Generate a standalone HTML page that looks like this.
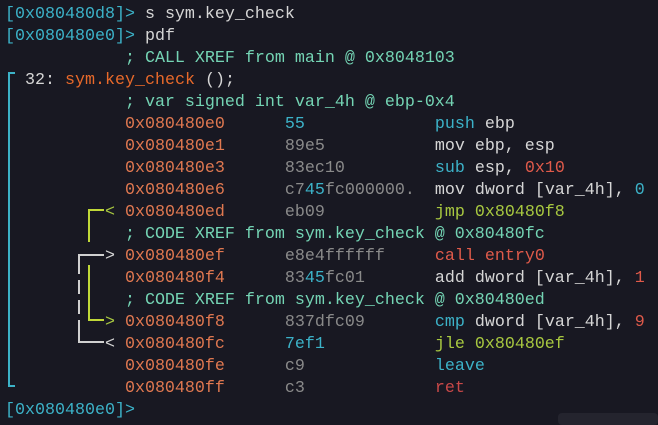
<!DOCTYPE html>
<html><head><style>
body{margin:0;width:658px;height:421px;background:#181822;overflow:hidden;position:relative;font-family:"Liberation Mono",monospace;font-size:16.67px;}
.l{position:absolute;left:5px;height:22px;line-height:22px;white-space:pre;color:#d6d6d6;margin-top:2px}
.p{color:#3cb2c8}.c{color:#74d4b4}.o{color:#e8692a}.a{color:#e07850}.g{color:#8a8a8a}.cy{color:#3cb2c8}
.y{color:#a8c840}.r{color:#e05a4a}.rr{color:#c84848}.w{color:#d6d6d6}.n{color:#3cb2c8}
.ln{position:absolute;}
</style></head><body>
<div class="l" style="top:2px"><span class="p">[0x080480d8]&gt;</span> s sym.key_check</div>
<div class="l" style="top:24px"><span class="p">[0x080480e0]&gt;</span> pdf</div>
<div class="l" style="top:46px">            <span class="c">; CALL XREF from main @ 0x8048103</span></div>
<div class="l" style="top:68px">  <span class="w">32:</span> <span class="o">sym.key_check</span> ();</div>
<div class="l" style="top:90px">            <span class="c">; var signed int var_4h @ ebp-0x4</span></div>
<div class="l" style="top:112px">            <span class="a">0x080480e0</span>      <span class="cy">55</span>             <span class="cy">push</span> ebp</div>
<div class="l" style="top:134px">            <span class="a">0x080480e1</span>      <span class="g">89e5</span>           mov ebp, esp</div>
<div class="l" style="top:156px">            <span class="a">0x080480e3</span>      <span class="g">83ec10</span>         <span class="cy">sub</span> esp, <span class="r">0x10</span></div>
<div class="l" style="top:178px">            <span class="a">0x080480e6</span>      <span class="g">c7</span><span class="cy">45</span><span class="g">fc000000.</span>  mov dword [var_4h], <span class="n">0</span></div>
<div class="l" style="top:200px">          <span class="y">&lt;</span> <span class="a">0x080480ed</span>      <span class="g">eb09</span>           <span class="y">jmp 0x80480f8</span></div>
<div class="l" style="top:222px">            <span class="c">; CODE XREF from sym.key_check @ 0x80480fc</span></div>
<div class="l" style="top:244px">          <span class="w">&gt;</span> <span class="a">0x080480ef</span>      <span class="g">e8e4ffffff</span>     <span class="r">call entry0</span></div>
<div class="l" style="top:266px">            <span class="a">0x080480f4</span>      <span class="g">83</span><span class="cy">45</span><span class="g">fc01</span>       add dword [var_4h], <span class="r">1</span></div>
<div class="l" style="top:288px">            <span class="c">; CODE XREF from sym.key_check @ 0x80480ed</span></div>
<div class="l" style="top:310px">          <span class="y">&gt;</span> <span class="a">0x080480f8</span>      <span class="g">837dfc09</span>       <span class="cy">cmp</span> dword [var_4h], <span class="r">9</span></div>
<div class="l" style="top:332px">          <span class="w">&lt;</span> <span class="a">0x080480fc</span>      <span class="cy">7ef1</span>           <span class="y">jle 0x80480ef</span></div>
<div class="l" style="top:354px">            <span class="a">0x080480fe</span>      <span class="g">c9</span>             <span class="cy">leave</span></div>
<div class="l" style="top:376px">            <span class="a">0x080480ff</span>      <span class="g">c3</span>             <span class="rr">ret</span></div>
<div class="l" style="top:398px"><span class="p">[0x080480e0]&gt;</span></div>
<div class="ln" style="left:8px;top:72px;width:2px;height:315px;background:#3cb2c8"></div>
<div class="ln" style="left:8px;top:72px;width:7px;height:2px;background:#3cb2c8"></div>
<div class="ln" style="left:8px;top:385px;width:7px;height:2px;background:#3cb2c8"></div>
<div class="ln" style="left:88px;top:209px;width:2px;height:33px;background:#c0d838"></div>
<div class="ln" style="left:88px;top:209px;width:16px;height:2px;background:#c0d838"></div>
<div class="ln" style="left:88px;top:265px;width:2px;height:56px;background:#c0d838"></div>
<div class="ln" style="left:88px;top:319px;width:16px;height:2px;background:#c0d838"></div>
<div class="ln" style="left:78px;top:254px;width:26px;height:2px;background:#d0d0d0"></div>
<div class="ln" style="left:78px;top:254px;width:2px;height:20px;background:#d0d0d0"></div>
<div class="ln" style="left:78px;top:280px;width:2px;height:14px;background:#d0d0d0"></div>
<div class="ln" style="left:78px;top:300px;width:2px;height:14px;background:#d0d0d0"></div>
<div class="ln" style="left:78px;top:320px;width:2px;height:23px;background:#d0d0d0"></div>
<div class="ln" style="left:78px;top:341px;width:26px;height:2px;background:#d0d0d0"></div>
<div class="ln" style="left:558px;top:413px;width:100px;height:12px;background:#24242e;border-radius:4px"></div>
</body></html>
